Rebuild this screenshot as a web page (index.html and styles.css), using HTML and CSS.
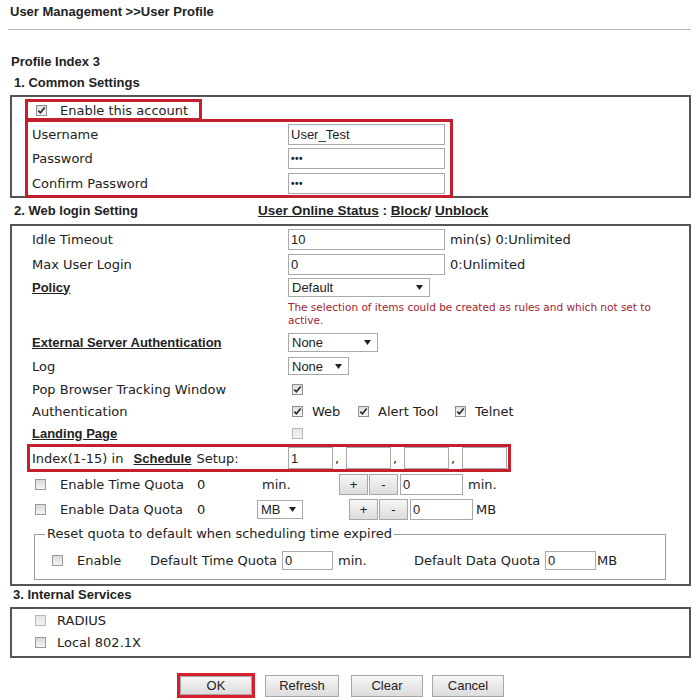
FILE: index.html
```html
<!DOCTYPE html>
<html lang="en">
<head>
<meta charset="utf-8">
<title>User Profile</title>
<link rel="stylesheet" href="styles.css">
</head>
<body>
<div class="page">
  <div class="title">User Management &gt;&gt;User Profile</div>
  <div class="rule"></div>
  <div class="profile">Profile Index 3</div>
  <div class="sec sec-1">1. Common Settings</div>

  <div class="box box-common">
    <div class="mark mark-enable">
      <span class="cb on"><svg viewBox="0 0 11 11"><path d="M2.3 5.6 4.4 7.8 8.7 2.6"/></svg></span>
      <span>Enable this account</span>
    </div>
    <div class="mark mark-cred">
      <div class="row h24"><span class="lbl">Username</span><input class="inp w156" type="text" value="User_Test" readonly></div>
      <div class="row h25"><span class="lbl">Password</span><input class="inp pw w156" type="text" value="•••" readonly></div>
      <div class="row h24"><span class="lbl">Confirm Password</span><input class="inp pw w156" type="text" value="•••" readonly></div>
    </div>
  </div>

  <div class="sec-head">
    <div class="sec sec-2">2. Web login Setting</div>
    <div class="status"><u>User Online Status</u> : <u>Block</u>/ <u>Unblock</u></div>
  </div>

  <div class="box box-web">
    <div class="row h26"><span class="lbl">Idle Timeout</span><input class="inp w156" type="text" value="10" readonly><span class="after">min(s) 0:Unlimited</span></div>
    <div class="row h24"><span class="lbl">Max User Login</span><input class="inp w156" type="text" value="0" readonly><span class="after">0:Unlimited</span></div>
    <div class="row h22"><span class="lbl strong">Policy</span><span class="sel w142"><span>Default</span><svg viewBox="0 0 7 5"><path d="M0 0h7L3.5 5z"/></svg></span></div>
    <div class="note">The selection of items could be created as rules and which not set to<br>active.</div>
    <div class="row h24"><span class="lbl strong">External Server Authentication</span><span class="sel w90"><span>None</span><svg viewBox="0 0 7 5"><path d="M0 0h7L3.5 5z"/></svg></span></div>
    <div class="row h24"><span class="lbl">Log</span><span class="sel w61"><span>None</span><svg viewBox="0 0 7 5"><path d="M0 0h7L3.5 5z"/></svg></span></div>
    <div class="row h22"><span class="lbl">Pop Browser Tracking Window</span><span class="cb on ml4"><svg viewBox="0 0 11 11"><path d="M2.3 5.6 4.4 7.8 8.7 2.6"/></svg></span></div>
    <div class="row h23"><span class="lbl">Authentication</span>
      <span class="cb on ml4"><svg viewBox="0 0 11 11"><path d="M2.3 5.6 4.4 7.8 8.7 2.6"/></svg></span><span class="opt o-web">Web</span>
      <span class="cb on"><svg viewBox="0 0 11 11"><path d="M2.3 5.6 4.4 7.8 8.7 2.6"/></svg></span><span class="opt o-alert">Alert Tool</span>
      <span class="cb on"><svg viewBox="0 0 11 11"><path d="M2.3 5.6 4.4 7.8 8.7 2.6"/></svg></span><span class="opt">Telnet</span>
    </div>
    <div class="row h21"><span class="lbl strong">Landing Page</span><span class="cb off ml4"></span></div>
    <div class="mark mark-index row">
      <span class="lbl">Index(1-15) in <b class="link">Schedule</b> Setup:</span>
      <input class="inp w45" type="text" value="1" readonly><span class="comma">,</span>
      <input class="inp w45" type="text" value="" readonly><span class="comma">,</span>
      <input class="inp w45" type="text" value="" readonly><span class="comma">,</span>
      <input class="inp w45" type="text" value="" readonly>
    </div>
    <div class="row h25 quota">
      <span class="cb plain"></span><span class="q-name">Enable Time Quota</span><span class="q-val">0</span><span class="q-unit">min.</span>
      <button class="btn pm">+</button><button class="btn pm">-</button><input class="inp w63" type="text" value="0" readonly><span class="after">min.</span>
    </div>
    <div class="row h25 quota">
      <span class="cb plain"></span><span class="q-name">Enable Data Quota</span><span class="q-val q-val-data">0</span>
      <span class="sel w46"><span>MB</span><svg viewBox="0 0 7 5"><path d="M0 0h7L3.5 5z"/></svg></span>
      <button class="btn pm pm-first">+</button><button class="btn pm">-</button><input class="inp w63" type="text" value="0" readonly><span class="after mb">MB</span>
    </div>
    <fieldset class="reset">
      <legend>Reset quota to default when scheduling time expired</legend>
      <div class="row h20">
        <span class="cb plain"></span><span class="r-enable">Enable</span>
        <span class="r-name">Default Time Quota</span><input class="inp w51" type="text" value="0" readonly><span class="r-unit">min.</span>
        <span class="r-name r-name-data">Default Data Quota</span><input class="inp w51" type="text" value="0" readonly><span class="r-mb">MB</span>
      </div>
    </fieldset>
  </div>

  <div class="sec sec-3">3. Internal Services</div>
  <div class="box box-services">
    <div class="row h22"><span class="cb off"></span><span>RADIUS</span></div>
    <div class="row h23"><span class="cb plain"></span><span>Local 802.1X</span></div>
  </div>

  <div class="actions">
    <span class="ok-mark"><button class="btn act ok">OK</button></span>
    <button class="btn act refresh">Refresh</button>
    <button class="btn act clear">Clear</button>
    <button class="btn act cancel">Cancel</button>
  </div>
</div>
</body>
</html>
```

FILE: styles.css
```css
body {
  margin: 0;
  background: #fff;
  color: #222;
  font-family: "DejaVu Sans", Verdana, sans-serif;
  font-size: 13px;
}

.page {
  width: 681px;
  margin-left: 10px;
}

/* headings */
.title,
.profile,
.sec,
.status,
.strong,
.link {
  font-family: "Liberation Sans", Arial, sans-serif;
  font-weight: bold;
  font-size: 13px;
}

.title {
  height: 20px;
  line-height: 16px;
  padding-top: 4px;
  box-sizing: border-box;
}

.rule {
  width: 683px;
  height: 1px;
  margin: 9px 0 0 -2px;
  background: #b9b9b9;
}

.profile {
  margin: 24px 0 0 1px;
  line-height: 16px;
}

.sec {
  line-height: 16px;
  padding-left: 4px;
}

.sec-1 { margin-top: 5px; }
.sec-3 { margin-top: 1px; padding-left: 3px; }

.sec-head {
  display: flex;
  margin-top: 5px;
}

.sec-head .sec { width: 244px; }

.status { line-height: 16px; font-size: 13.5px; }
.status u, .strong, .link { text-decoration: underline; }

.link { margin: 0 1px 0 6px; }

/* framed groups */
.box {
  border: 2px solid #555;
  box-sizing: border-box;
}

.box-common {
  margin-top: 4px;
  height: 103px;
  padding: 2px 0 0 13px;
}

.box-web {
  margin-top: 5px;
  height: 362px;
  padding: 0 0 0 20px;
}

.box-services {
  margin-top: 4px;
  height: 51px;
  padding-left: 23px;
}

.mark {
  border: 3px solid #c41f2c;
  box-sizing: border-box;
}

.mark-enable {
  width: 177px;
  height: 22px;
  display: flex;
  align-items: center;
  padding-left: 8px;
}

.mark-enable .cb { margin-right: 13px; }

.mark-cred {
  width: 428px;
  height: 79px;
  margin-top: -2px;
  padding-left: 4px;
}

.mark-index {
  width: 484px;
  height: 28px;
  margin-left: -5px;
  padding-left: 2px;
}

/* rows */
.row {
  display: flex;
  align-items: center;
  white-space: nowrap;
}

.h20 { height: 20px; }
.h21 { height: 21px; }
.h22 { height: 22px; }
.h23 { height: 23px; }
.h24 { height: 24px; }
.h25 { height: 25px; }
.h26 { height: 26px; }

.lbl {
  flex: none;
  width: 256px;
}

.after { margin-left: 5px; }
.after.mb { margin-left: 3px; }

.note {
  height: 32px;
  box-sizing: border-box;
  padding: 3px 0 0 256px;
  font-size: 10.5px;
  line-height: 13px;
  color: #a3232f;
}

/* form controls */
.inp {
  flex: none;
  height: 21px;
  margin: 0;
  padding: 0 2px;
  border: 1px solid #a9a9a9;
  border-radius: 0;
  box-sizing: border-box;
  background: #fff;
  color: #222;
  font: 13px "Liberation Sans", Arial, sans-serif;
  outline: none;
}

.inp.pw { font-size: 10px; font-weight: bold; letter-spacing: 0.5px; }

.w45 { width: 45px; height: 22px; }
.w51 { width: 51px; height: 19px; }
.w63 { width: 63px; }
.w156 { width: 157px; }

.sel {
  flex: none;
  display: flex;
  align-items: center;
  justify-content: space-between;
  height: 19px;
  padding: 0 6px 0 3px;
  border: 1px solid #a9a9a9;
  box-sizing: border-box;
  background: #fff;
  font: 13px "Liberation Sans", Arial, sans-serif;
}

.sel svg { width: 7px; height: 5px; fill: #222; }

.w142 { width: 142px; }
.w90 { width: 90px; }
.w61 { width: 61px; height: 18px; }
.w46 { width: 46px; }

.comma {
  flex: none;
  width: 13px;
  padding-left: 2px;
  box-sizing: border-box;
}

/* checkboxes */
.cb {
  flex: none;
  width: 11px;
  height: 11px;
  border: 1px solid #8e8e8e;
  box-sizing: border-box;
  background: linear-gradient(#dedede, #f7f7f7);
  position: relative;
}

.cb svg {
  position: absolute;
  left: -1px;
  top: -1px;
  width: 11px;
  height: 11px;
  fill: none;
  stroke: #2a2a2a;
  stroke-width: 1.6;
}

.cb.off { border-color: #b9b9b9; background: linear-gradient(#e6e6e6, #f3f3f3); }
.cb.plain { border-color: #9a9a9a; background: linear-gradient(#d9d9d9, #f4f4f4); }

.ml4 { margin-left: 4px; }

.opt { margin-left: 9px; }
.o-web { width: 46px; }
.o-alert { width: 77px; }

/* quota rows */
.quota .cb { margin: 0 14px 0 3px; }
.q-name { width: 137px; }
.q-val { width: 65px; }
.q-val-data { width: 60px; }
.q-unit { width: 77px; }
.quota .sel { margin-right: 46px; }

.btn {
  flex: none;
  margin: 0;
  border: 1px solid #a7a7a7;
  border-radius: 0;
  background: linear-gradient(#f6f6f6, #dcdcdc);
  color: #222;
  font: 13px "Liberation Sans", Arial, sans-serif;
  padding: 0;
}

.pm {
  width: 29px;
  height: 21px;
  margin-right: 1px;
}

.pm + .inp { margin-left: 1px; }

/* reset fieldset */
.reset {
  width: 632px;
  margin: 4px 0 0 2px;
  padding: 8px 0 9px 10px;
  border: 1px solid #9c9c9c;
  box-sizing: border-box;
}

.reset legend {
  padding: 0 2px;
  line-height: 16px;
}

.reset .cb { margin: 0 14px 0 7px; }
.r-enable { width: 73px; }
.r-name { width: 132px; }
.r-name-data { width: 131px; }
.r-unit { width: 76px; margin-left: 5px; }
.r-mb { margin-left: 1px; }

/* internal services */
.box-services .cb { margin-right: 11px; }

/* action buttons */
.actions {
  display: flex;
  align-items: center;
  margin-top: 15px;
  padding-left: 167px;
}

.ok-mark {
  display: flex;
  border: 3px solid #d81f2d;
}

.act { height: 22px; }
.ok { width: 72px; height: 19px; }
.refresh { width: 74px; margin-left: 10px; }
.clear { width: 72px; margin-left: 12px; }
.cancel { width: 72px; margin-left: 9px; }
```
